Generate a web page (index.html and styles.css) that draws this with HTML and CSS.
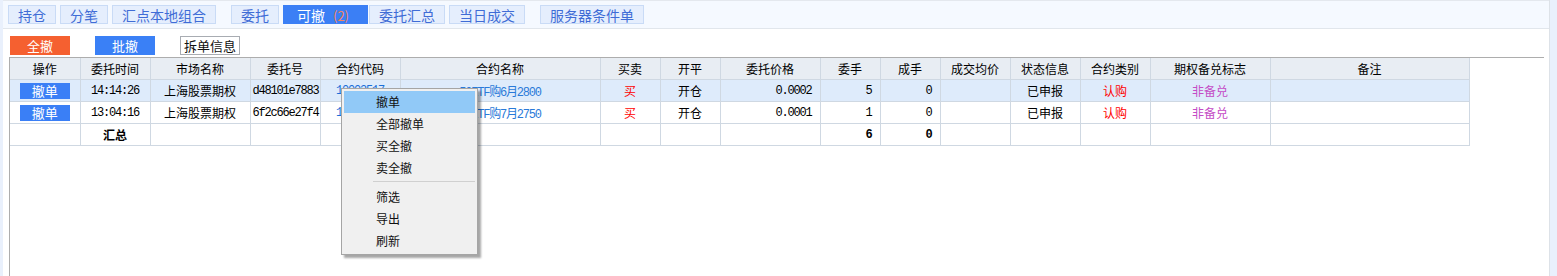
FILE: index.html
```html
<!DOCTYPE html>
<html lang="zh-CN">
<head>
    <meta charset="UTF-8">
    <title>可撤委托</title>
    <link rel="stylesheet" href="styles.css">
</head>
<body>
    <div class="page">
        <!-- 顶部页签 -->
        <div class="tab-bar">
            <div class="tab-group">
                <span class="tab">持仓</span>
                <span class="tab">分笔</span>
                <span class="tab">汇点本地组合</span>
            </div>
            <div class="tab-group">
                <span class="tab">委托</span>
                <span class="tab active">可撤<em class="count">(2)</em></span>
                <span class="tab">委托汇总</span>
                <span class="tab">当日成交</span>
            </div>
            <div class="tab-group">
                <span class="tab">服务器条件单</span>
            </div>
        </div>

        <!-- 操作按钮 -->
        <div class="toolbar">
            <button class="btn btn-orange">全撤</button>
            <button class="btn btn-blue">批撤</button>
            <button class="btn btn-plain">拆单信息</button>
        </div>

        <!-- 委托列表 -->
        <div class="grid-panel">
            <table class="grid">
                <colgroup>
                    <col style="width:70px"><col style="width:70px"><col style="width:100px"><col style="width:70px">
                    <col style="width:80px"><col style="width:200px"><col style="width:60px"><col style="width:60px">
                    <col style="width:100px"><col style="width:60px"><col style="width:60px"><col style="width:70px">
                    <col style="width:70px"><col style="width:70px"><col style="width:120px"><col style="width:199px">
                </colgroup>
                <thead>
                    <tr>
                        <th>操作</th><th>委托时间</th><th>市场名称</th><th>委托号</th>
                        <th>合约代码</th><th>合约名称</th><th>买卖</th><th>开平</th>
                        <th>委托价格</th><th>委手</th><th>成手</th><th>成交均价</th>
                        <th>状态信息</th><th>合约类别</th><th>期权备兑标志</th><th>备注</th>
                    </tr>
                </thead>
                <tbody>
                    <tr class="selected">
                        <td><span class="row-btn">撤单</span></td>
                        <td class="mono">14:14:26</td>
                        <td>上海股票期权</td>
                        <td class="mono">d48101e7883</td>
                        <td class="mono code">10002517</td>
                        <td class="mono name">50ETF购6月2800</td>
                        <td class="red">买</td>
                        <td>开仓</td>
                        <td class="mono num">0.0002</td>
                        <td class="mono num">5</td>
                        <td class="mono num">0</td>
                        <td></td>
                        <td>已申报</td>
                        <td class="red">认购</td>
                        <td class="purple">非备兑</td>
                        <td></td>
                    </tr>
                    <tr>
                        <td><span class="row-btn">撤单</span></td>
                        <td class="mono">13:04:16</td>
                        <td>上海股票期权</td>
                        <td class="mono">6f2c66e27f4</td>
                        <td class="mono code">10002519</td>
                        <td class="mono name">50ETF购7月2750</td>
                        <td class="red">买</td>
                        <td>开仓</td>
                        <td class="mono num">0.0001</td>
                        <td class="mono num">1</td>
                        <td class="mono num">0</td>
                        <td></td>
                        <td>已申报</td>
                        <td class="red">认购</td>
                        <td class="purple">非备兑</td>
                        <td></td>
                    </tr>
                    <tr class="total">
                        <td></td>
                        <td class="bold">汇总</td>
                        <td></td><td></td><td></td><td></td><td></td><td></td><td></td>
                        <td class="mono num bold">6</td>
                        <td class="mono num bold">0</td>
                        <td></td><td></td><td></td><td></td><td></td>
                    </tr>
                </tbody>
            </table>
        </div>
    </div>

    <!-- 右键菜单 -->
    <ul class="context-menu">
        <li class="hover">撤单</li>
        <li>全部撤单</li>
        <li>买全撤</li>
        <li>卖全撤</li>
        <li class="sep"></li>
        <li>筛选</li>
        <li>导出</li>
        <li>刷新</li>
    </ul>
</body>
</html>
```

FILE: styles.css
```css
html, body {
    height: 100%;
}

body {
    margin: 0;
    background: #e9f0fc;
    font-family: "Noto Sans CJK SC", "Liberation Sans", sans-serif;
    font-size: 12px;
    color: #000;
    overflow: hidden;
}

.page {
    margin-left: 3px;
    width: 1546px;
    height: 100%;
    background: #fff;
    border-right: 1px solid #dde2e8;
    display: flex;
    flex-direction: column;
}

/* 页签 */
.tab-bar {
    height: 29px;
    background: #f5f9ff;
    border-top: 1px solid #e4e8ee;
    border-bottom: 1px solid #e1e6ec;
    display: flex;
    align-items: flex-start;
    padding: 4px 0 0 5px;
    box-sizing: border-box;
    gap: 15px;
}

.tab-group {
    display: flex;
    gap: 4px;
}

.tab {
    height: 19px;
    line-height: 18px;
    padding: 0 9px;
    font-size: 14px;
    color: #3f6cd6;
    background: #e5eefd;
    border: 1px solid #c9dbf6;
    box-sizing: border-box;
    white-space: nowrap;
}

.tab.active {
    width: 85px;
    background: #3b7ff5;
    border-color: #3b7ff5;
    color: #fff;
    padding: 0 0 0 13px;
    margin-right: -3px;
}

.tab .count {
    font-style: normal;
    font-size: 13px;
    color: #f7845c;
    margin-left: 8px;
}

/* 按钮行 */
.toolbar {
    display: flex;
    align-items: center;
    padding: 5px 0 0 7px;
    height: 28px;
    box-sizing: border-box;
}

.btn {
    width: 60px;
    height: 19px;
    padding: 0;
    border: none;
    font-family: "Noto Sans CJK SC", sans-serif;
    font-size: 13px;
    line-height: 19px;
    color: #fff;
    margin-right: 25px;
}

.btn-orange {
    background: #f56030;
}

.btn-blue {
    background: #3a80f6;
}

.btn-plain {
    background: #fff;
    color: #111;
    border: 1px solid #a8acb2;
    line-height: 17px;
}

/* 表格 */
.grid-panel {
    flex: 1;
    margin: 0 5px 0 6px;
    border-top: 1px solid #adadad;
    border-left: 1px solid #adadad;
}

.grid {
    border-collapse: collapse;
    table-layout: fixed;
    width: 1459px;
}

.grid th,
.grid td {
    height: 21px;
    padding: 0 2px;
    border: 1px solid #cfd8e2;
    text-align: center;
    white-space: nowrap;
    overflow: hidden;
    font-weight: normal;
}

.grid tr > :first-child {
    border-left: none;
}

.grid thead tr > * {
    border-top: none;
}

.grid th {
    background: #e8edf3;
    font-size: 12px;
}

.grid tr.selected td {
    background: #deebfb;
}

.row-btn {
    display: inline-block;
    width: 50px;
    height: 16px;
    line-height: 16px;
    background: #3a7ff6;
    color: #fff;
    font-size: 13px;
}

.mono {
    font-family: "Liberation Mono", "Noto Sans CJK SC", monospace;
    font-size: 12px;
    letter-spacing: -1.2px;
}

.num {
    text-align: right !important;
    padding-right: 8px !important;
}

.code {
    color: #1b6fd8;
    font-weight: bold;
}

.name {
    color: #2a7ad9;
}

.red {
    color: #ff0000;
}

.purple {
    color: #c44cc6;
}

.bold {
    font-weight: bold !important;
}

/* 右键菜单 */
.context-menu {
    position: absolute;
    left: 341px;
    top: 88px;
    width: 137px;
    margin: 0;
    padding: 2px;
    list-style: none;
    background: #f0f0f0;
    border: 1px solid #a5a5a5;
    box-sizing: border-box;
    box-shadow: 3px 3px 2px rgba(0, 0, 0, 0.35);
}

.context-menu li {
    height: 22px;
    line-height: 22px;
    padding-left: 32px;
    font-size: 12px;
    color: #111;
}

.context-menu li.hover {
    background: #91c9f7;
}

.context-menu li.sep {
    height: 1px;
    margin: 2px 0 4px 29px;
    padding: 0;
    background: #d0d0d0;
}
```
